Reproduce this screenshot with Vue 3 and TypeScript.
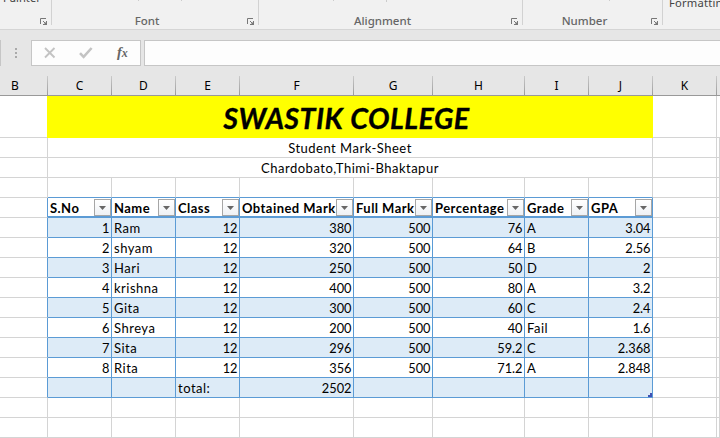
<script setup lang="ts">
interface Student { name: string; cls: string; obtained: string; full: string; percent: string; grade: string; gpa: string }

const letters: string[] = ['B', 'C', 'D', 'E', 'F', 'G', 'H', 'I', 'J', 'K', '']
const groups: { label: string; kind: string }[] = [
  { label: '', kind: 'clipboard' },
  { label: 'Font', kind: 'font' },
  { label: 'Alignment', kind: 'alignment' },
  { label: 'Number', kind: 'number' },
]
const headers: string[] = ['S.No', 'Name', 'Class', 'Obtained Mark', 'Full Mark', 'Percentage', 'Grade', 'GPA']
const students: Student[] = [
  { name: 'Ram', cls: '12', obtained: '380', full: '500', percent: '76', grade: 'A', gpa: '3.04' },
  { name: 'shyam', cls: '12', obtained: '320', full: '500', percent: '64', grade: 'B', gpa: '2.56' },
  { name: 'Hari', cls: '12', obtained: '250', full: '500', percent: '50', grade: 'D', gpa: '2' },
  { name: 'krishna', cls: '12', obtained: '400', full: '500', percent: '80', grade: 'A', gpa: '3.2' },
  { name: 'Gita', cls: '12', obtained: '300', full: '500', percent: '60', grade: 'C', gpa: '2.4' },
  { name: 'Shreya', cls: '12', obtained: '200', full: '500', percent: '40', grade: 'Fail', gpa: '1.6' },
  { name: 'Sita', cls: '12', obtained: '296', full: '500', percent: '59.2', grade: 'C', gpa: '2.368' },
  { name: 'Rita', cls: '12', obtained: '356', full: '500', percent: '71.2', grade: 'A', gpa: '2.848' },
]
const rows: string[][] = [
  ...students.map((s, i) => [String(i + 1), s.name, s.cls, s.obtained, s.full, s.percent, s.grade, s.gpa]),
  ['', '', 'total:', '2502', '', '', '', ''],
]
const isNumber = (v: string): boolean => /^[\d.]+$/.test(v)
</script>

<template>
  <div class="sheet-app">
    <div class="ribbon">
      <div v-for="g in groups" :key="g.kind" class="group" :class="g.kind">
        <span v-if="g.kind === 'clipboard'" class="cut painter">Painter</span>
        <i v-if="g.kind === 'font'" class="tick t1"></i>
        <i v-if="g.kind === 'font'" class="tick t2"></i>
        <i v-if="g.kind === 'alignment'" class="tick t3"></i>
        <i v-if="g.kind === 'alignment'" class="tick t4"></i>
        <i v-if="g.kind === 'number'" class="tick t5"></i>
        <span class="label">{{ g.label }}</span>
        <svg class="launcher" width="8" height="8" viewBox="0 0 8 8">
          <path d="M.5 6V.5H6" fill="none" stroke="#777" />
          <path d="M3 3L5 5" stroke="#777" fill="none" />
          <path d="M7 3V7H3V6H4L6 4V3Z" fill="#777" />
        </svg>
      </div>
      <div class="group styles"><span class="cut formatting">Formatting</span></div>
    </div>

    <div class="formula-bar">
      <div class="name-box"></div>
      <div class="grip"><i></i><i></i><i></i></div>
      <div class="tools">
        <svg width="12" height="12" viewBox="0 0 12 12"><path d="M1 1L10.5 10.5M10.5 1L1 10.5" stroke="#c3c3c3" stroke-width="1.9" fill="none" /></svg>
        <svg width="14" height="12" viewBox="0 0 14 12"><path d="M1 6.2L4.6 9.8L12.6 1" stroke="#c3c3c3" stroke-width="2.6" fill="none" /></svg>
        <span class="fx">f<small>x</small></span>
      </div>
      <div class="input"></div>
    </div>

    <div class="grid letters">
      <div v-for="(l, i) in letters" :key="i" class="letter">{{ l }}</div>
    </div>

    <div class="grid body">
      <div class="cell tall"></div>
      <div class="cell banner"><span>SWASTIK COLLEGE</span></div>
      <div class="cell tall"></div>
      <div class="cell tall"></div>

      <div class="cell"></div>
      <div class="cell merged"><span>Student Mark-Sheet</span></div>
      <div class="cell"></div>
      <div class="cell"></div>

      <div class="cell"></div>
      <div class="cell merged"><span>Chardobato,Thimi-Bhaktapur</span></div>
      <div class="cell"></div>
      <div class="cell"></div>

      <div v-for="n in 11" :key="'s' + n" class="cell" :class="{ above: n > 1 && n < 10 }"></div>

      <div class="cell edge"></div>
      <div v-for="h in headers" :key="h" class="cell data head">
        <span>{{ h }}</span>
        <span class="filter"><svg width="7" height="4" viewBox="0 0 7 4"><path d="M0 0H7L3.5 4Z" fill="#666" /></svg></span>
      </div>
      <div class="cell"></div>
      <div class="cell"></div>

      <template v-for="(r, ri) in rows" :key="ri">
        <div class="cell edge"></div>
        <div v-for="(v, ci) in r" :key="ci" class="cell data" :class="{ band: ri % 2 === 0, num: isNumber(v) }">
          <span>{{ v }}</span>
          <svg v-if="ri === 8 && ci === 7" class="handle" width="4" height="4" viewBox="0 0 4 4"><path d="M2 0H4V4H0V2H2Z" fill="#3f51b5" /></svg>
        </div>
        <div class="cell"></div>
        <div class="cell"></div>
      </template>

      <div v-for="n in 22" :key="'e' + n" class="cell"></div>
    </div>
  </div>
</template>

<style>
body { margin: 0; overflow: hidden; }
</style>

<style scoped>
.sheet-app { width: 720px; height: 438px; overflow: hidden; background: #e6e6e6; color: #000; font-family: Lato, "Liberation Sans", sans-serif; }
.sheet-app * { box-sizing: border-box; }
.ribbon { height: 30px; display: flex; background: #f1f1f1; border-bottom: 1px solid #d5d5d5; font: 12px/14px "Open Sans", sans-serif; overflow: hidden; }
.group { position: relative; height: 25px; border-right: 1px solid #d2d2d2; display: flex; justify-content: center; align-items: flex-end; flex: none; }
.clipboard { width: 52px; }
.font { width: 207px; }
.alignment { width: 264px; }
.number { width: 140px; }
.styles { width: 57px; border: 0; }
.label { color: #666; font: 500 11.5px/14px "Noto Sans", sans-serif; position: relative; top: 3px; left: -8px; }
.launcher { position: absolute; right: 3px; bottom: -1px; }
.cut { position: absolute; color: #444; white-space: nowrap; font-family: "Noto Sans", sans-serif; }
.painter { left: 3px; top: -9px; font-size: 11.2px; }
.formatting { left: 6px; top: -4px; font-size: 11.2px; letter-spacing: .2px; }
.tick { position: absolute; top: 0; width: 1px; height: 1px; background: #ccc; }
.t1 { left: 86px; } .t2 { left: 129px; } .t3 { left: 74px; } .t4 { left: 127px; height: 2px; } .t5 { left: 86px; }

.formula-bar { height: 46px; padding-top: 10px; display: flex; align-items: flex-start; }
.name-box { width: 1px; height: 26px; background: #c6c6c6; }
.grip { width: 30px; height: 26px; display: flex; flex-direction: column; justify-content: center; align-items: center; gap: 2px; }
.grip i { width: 2px; height: 2px; background: #aaa; }
.tools { width: 110px; height: 26px; background: #fdfdfd; border: 1px solid #c6c6c6; display: flex; align-items: center; padding-left: 12px; }
.tools svg:nth-child(2) { margin-left: 23px; }
.fx { margin-left: 24px; padding-bottom: 2px; font: italic bold 14.5px/20px "Liberation Serif", serif; color: #666; display: block; }
.fx small { font-size: 12px; }
.input { margin-left: 3px; flex: 1; height: 26px; background: #fdfdfd; border: 1px solid #c6c6c6; border-right: 0; }

.grid { display: grid; grid-template-columns: 48px 64px 64px 64px 114px 79px 92px 64px 64px 64px 3px; }
.letters { height: 20px; border-bottom: 1px solid #999; }
.letter { height: 19px; font: 12px/19px "Noto Sans", sans-serif; text-align: center; border-right: 1px solid; border-image: linear-gradient(#ccc, #999) 1; }
.letter:first-child { padding-right: 17px; }
.letter:last-child { border: 0; }
.body { grid-template-rows: 42px repeat(15, 20px); background: #fff; }
.cell { position: relative; border-right: 1px solid #d4d4d4; border-bottom: 1px solid #d4d4d4; display: flex; align-items: center; min-width: 0; white-space: nowrap; padding-top: 2px; font-size: 13px; line-height: 17px; letter-spacing: .5px; }
.cell:nth-child(4) { border-right: 0; }
.banner, .merged { grid-column: 2 / 10; justify-content: center; }
.banner { margin-left: -1px; padding: 2px 6px 0 0; background: #ff0; border-color: #ff0; font-size: 28.6px; line-height: 36px; font-weight: 700; font-style: italic; letter-spacing: .5px; -webkit-text-stroke: .35px #000; }
.above { border-bottom-color: #5b9bd5; }
.edge { border-right-color: #5b9bd5; }
.data { border-color: #5b9bd5; padding: 2px 2px 0; }
.band { background: #ddebf7; }
.num { justify-content: flex-end; padding-right: 1.5px; font-size: 12.8px; letter-spacing: 0; }
.head { border-bottom-width: 2px; font-weight: 700; padding-top: 3px; letter-spacing: .45px; }
.filter { position: absolute; right: 0; top: 1px; width: 17px; height: 17px; border: 1px solid #a6a6a6; background: linear-gradient(#fff, #eef1f5); display: flex; align-items: center; justify-content: center; }
.handle { position: absolute; right: 0; bottom: 0; }
</style>
